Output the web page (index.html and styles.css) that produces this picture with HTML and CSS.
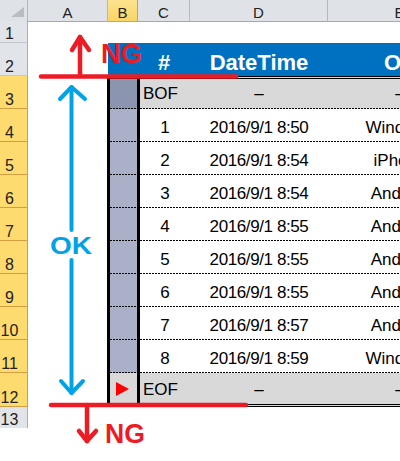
FILE: index.html
```html
<!DOCTYPE html>
<html lang="ja">
<head>
    <meta charset="UTF-8">
    <title>BOF / EOF</title>
    <link rel="stylesheet" href="styles.css">
</head>
<body>
<div class="page">
    <div class="sheet">
        <!-- column headers -->
        <div class="row colheads">
            <div class="corner"><span class="tri"></span></div>
            <div class="ch">A</div>
            <div class="ch sel">B</div>
            <div class="ch">C</div>
            <div class="ch">D</div>
            <div class="ch">E</div>
        </div>

        <div class="row r1">
            <div class="rh">1</div>
        </div>

        <div class="row r2">
            <div class="rh">2</div>
            <div></div>
            <div class="c hd"></div>
            <div class="c hd">#</div>
            <div class="c hd">DateTime</div>
            <div class="c hd">OS</div>
        </div>

        <div class="row">
            <div class="rh sel">3</div>
            <div class="lead"></div>
            <div class="mark top first dash"></div>
            <div class="c c3 gray first dash lbl">BOF</div>
            <div class="c gray first dash">–</div>
            <div class="c gray first dash">–</div>
        </div>

        <div class="row data">
            <div class="rh sel">4</div>
            <div class="lead"></div>
            <div class="mark dash"></div>
            <div class="c c3 dash">1</div>
            <div class="c dash dt">2016/9/1 8:50</div>
            <div class="c dash">Windows</div>
        </div>
        <div class="row data">
            <div class="rh sel">5</div>
            <div class="lead"></div>
            <div class="mark dash"></div>
            <div class="c c3 dash">2</div>
            <div class="c dash dt">2016/9/1 8:54</div>
            <div class="c dash">iPhone</div>
        </div>
        <div class="row data">
            <div class="rh sel">6</div>
            <div class="lead"></div>
            <div class="mark dash"></div>
            <div class="c c3 dash">3</div>
            <div class="c dash dt">2016/9/1 8:54</div>
            <div class="c dash">Android</div>
        </div>
        <div class="row data">
            <div class="rh sel">7</div>
            <div class="lead"></div>
            <div class="mark dash"></div>
            <div class="c c3 dash">4</div>
            <div class="c dash dt">2016/9/1 8:55</div>
            <div class="c dash">Android</div>
        </div>
        <div class="row data">
            <div class="rh sel">8</div>
            <div class="lead"></div>
            <div class="mark dash"></div>
            <div class="c c3 dash">5</div>
            <div class="c dash dt">2016/9/1 8:55</div>
            <div class="c dash">Android</div>
        </div>
        <div class="row data">
            <div class="rh sel">9</div>
            <div class="lead"></div>
            <div class="mark dash"></div>
            <div class="c c3 dash">6</div>
            <div class="c dash dt">2016/9/1 8:55</div>
            <div class="c dash">Android</div>
        </div>
        <div class="row data">
            <div class="rh sel">10</div>
            <div class="lead"></div>
            <div class="mark dash"></div>
            <div class="c c3 dash">7</div>
            <div class="c dash dt">2016/9/1 8:57</div>
            <div class="c dash">Android</div>
        </div>
        <div class="row data">
            <div class="rh sel">11</div>
            <div class="lead"></div>
            <div class="mark dash"></div>
            <div class="c c3 dash">8</div>
            <div class="c dash dt">2016/9/1 8:59</div>
            <div class="c dash">Windows</div>
        </div>

        <div class="row r12">
            <div class="rh sel">12</div>
            <div class="lead"></div>
            <div class="mark end last"><span class="cursor"></span></div>
            <div class="c c3 gray last lbl">EOF</div>
            <div class="c gray last">–</div>
            <div class="c gray last">–</div>
        </div>

        <div class="row r13">
            <div class="rh">13</div>
        </div>
    </div>

    <!-- annotation drawn over the sheet -->
    <svg class="overlay" width="400" height="461" viewBox="0 0 400 461">
        <g stroke="#ed1c24" stroke-width="4.5" stroke-linecap="round" stroke-linejoin="round" fill="none">
            <line x1="41" y1="76.5" x2="236" y2="76.5"/>
            <line x1="80" y1="76" x2="80" y2="37"/>
            <polyline points="72,50 80,37 89,50"/>
            <line x1="51" y1="405" x2="246" y2="405"/>
            <line x1="87" y1="405" x2="87" y2="441"/>
            <polyline points="79,431 87,441 96,431"/>
        </g>
        <g stroke="#00a2e8" stroke-width="4" stroke-linecap="round" stroke-linejoin="round" fill="none">
            <line x1="71.5" y1="87" x2="71.5" y2="230"/>
            <polyline points="60,99 71.5,87 85,99"/>
            <line x1="71.5" y1="260" x2="71.5" y2="393"/>
            <polyline points="61,381 71.5,393 83,381"/>
        </g>
        <text class="ng" x="101" y="63" font-size="28" textLength="41" lengthAdjust="spacingAndGlyphs">NG</text>
        <text class="ng" x="105" y="443" font-size="27" textLength="40" lengthAdjust="spacingAndGlyphs">NG</text>
        <text class="ok" x="50" y="254" font-size="24" textLength="42" lengthAdjust="spacingAndGlyphs">OK</text>
    </svg>
</div>
</body>
</html>
```

FILE: styles.css
```css
body {
    margin: 0;
    font-family: "Liberation Sans", Arial, sans-serif;
    background: #fff;
}

.page {
    position: relative;
    width: 400px;
    height: 461px;
    overflow: hidden;
}

/* Sheet grid */
.sheet {
    display: flex;
    flex-direction: column;
    width: 472px;
}

.row {
    display: grid;
    grid-template-columns: 28px 80px 30px 52px 138px 144px;
    height: 33px;
}

.row.colheads { height: 21px; }
.row.r1 { height: 22px; }
.row.r12 { height: 34px; }
.row.r13 { height: 19px; }

.row > div {
    box-sizing: border-box;
}

/* Column headers */
.corner {
    background: #dfe3e8;
    border-right: 1px solid #b4b9c0;
    border-bottom: 1px solid #a3a8af;
    display: flex;
    justify-content: flex-end;
    align-items: flex-end;
    padding: 0 3px 4px 0;
}

.tri {
    width: 13px;
    height: 10px;
    background: #b9bdc3;
    clip-path: polygon(100% 0, 100% 100%, 0 100%);
}

.ch {
    background: #dfe3e8;
    border-right: 1px solid #b4b9c0;
    border-bottom: 1px solid #a3a8af;
    display: flex;
    justify-content: center;
    align-items: flex-start;
    padding-top: 5px;
    font-size: 15px;
    line-height: 16px;
    color: #222;
}

.ch.sel {
    background: linear-gradient(#fde38f, #f9d566);
    border-right-color: #d0a048;
    border-bottom-color: #e0a23a;
}

/* Row headers */
.rh {
    background: #e1e4e9;
    border-right: 1px solid #a9aeb5;
    border-bottom: 1px solid #c3c7cd;
    display: flex;
    justify-content: center;
    align-items: flex-end;
    padding-right: 8px;
    font-size: 16px;
    line-height: 16px;
    color: #222;
}

.rh.sel {
    background: #fedb6e;
    border-right-color: #d29e40;
    border-bottom-color: #d29e40;
}

.r13 .rh {
    align-items: flex-start;
    padding-top: 5px;
    border-bottom: none;
}

/* Table cells */
.c {
    display: flex;
    justify-content: center;
    align-items: center;
    font-size: 17px;
    color: #000;
    white-space: nowrap;
}

.data .c {
    padding-top: 4px;
}

.hd {
    background-color: #0070c0;
    color: #fff;
    font-weight: bold;
    font-size: 22px;
    padding-top: 6px;
}

.gray { background-color: #d9d9d9; }

.lbl {
    justify-content: flex-start;
    padding-left: 3px;
}

.dt { letter-spacing: -0.4px; }

.lead { border-right: 1px solid #000; }

.c3 { border-left: 2px solid #000; }

.mark {
    background-color: #a9b0c8;
    border-left: 2px solid #000;
    border-right: 1px solid #000;
}

.mark.top { background-color: #8b95af; }

.mark.end {
    background-color: #d9d9d9;
    display: flex;
    justify-content: center;
    align-items: center;
    padding-right: 3px;
}

.cursor {
    width: 0;
    height: 0;
    border-left: 13px solid #ff0000;
    border-top: 7px solid transparent;
    border-bottom: 7px solid transparent;
}

.first { border-top: 3px double #000; }
.last { border-bottom: 3px double #000; }
.r12 .c { padding-top: 3px; }

/* dotted row separator */
.dash {
    background-image: repeating-linear-gradient(90deg, #000 0 2px, transparent 2px 3px);
    background-size: 100% 1px;
    background-position: left bottom;
    background-repeat: no-repeat;
}

/* Annotation layer */
.overlay {
    position: absolute;
    top: 0;
    left: 0;
    pointer-events: none;
}

.overlay text {
    font-family: "Liberation Sans", Arial, sans-serif;
    font-weight: bold;
}

.ng { fill: #ed1c24; }
.ok { fill: #00a2e8; }
```
